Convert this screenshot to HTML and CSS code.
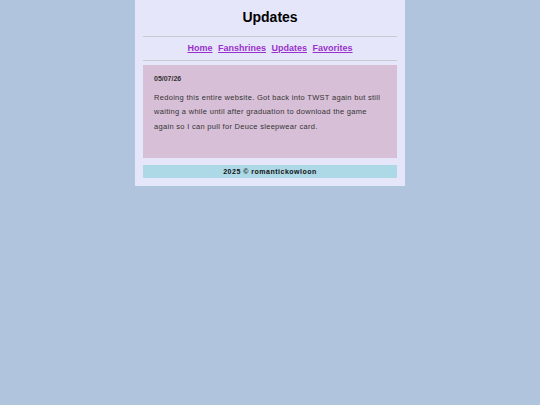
FILE: index.html
```html
<!DOCTYPE html>
<html lang="en">
<head>
    <meta charset="UTF-8">
    <title>Updates</title>
    <link rel="stylesheet" href="styles.css">
</head>
<body>
    <div class="container">
        <header>
            <h1>Updates</h1>
        </header>
        <hr>
        <nav>
            <a href="#">Home</a>
            <a href="#">Fanshrines</a>
            <a href="#">Updates</a>
            <a href="#">Favorites</a>
        </nav>
        <hr>
        <main>
            <div class="post">
                <p class="date">05/07/26</p>
                <p>Redoing this entire website. Got back into TWST again but still waiting a while until after graduation to download the game again so I can pull for Deuce sleepwear card.</p>
            </div>
        </main>
        <footer>
            <p>2025 &copy; romantickowloon</p>
        </footer>
    </div>
</body>
</html>
```

FILE: styles.css
```css
body, h1, p {
    margin: 0;
    padding: 0;
}

body {
    background-color: lightsteelblue;
    font-family: "Liberation Sans", Arial, sans-serif;
}

.container {
    width: 270px;
    margin: 0 auto;
    padding: 0 8px 8px;
    box-sizing: border-box;
    background-color: lavender;
}

header {
    padding: 8px 0 10px;
}

header h1 {
    font-size: 14px;
    text-align: center;
    line-height: 18px;
}

hr {
    margin: 0;
    border: none;
    border-top: 1px solid #c8c8d0;
}

nav {
    text-align: center;
    font-size: 9px;
    line-height: 11px;
    padding: 6px 0 6px;
}

nav a {
    color: darkorchid;
    font-weight: bold;
    margin: 0 1.5px;
}

main {
    margin-top: 4px;
}

.post {
    background-color: thistle;
    padding: 7px 11px 24px;
    font-size: 7.5px;
    letter-spacing: 0.3px;
    line-height: 14.5px;
    color: #333;
}

.post .date {
    font-weight: bold;
    font-size: 7px;
    letter-spacing: 0;
    margin: 0 0 4px;
}

footer {
    margin-top: 7px;
    background-color: lightblue;
    text-align: center;
    font-size: 7px;
    font-weight: bold;
    letter-spacing: 0.5px;
    line-height: 13px;
    color: #111;
}
```
